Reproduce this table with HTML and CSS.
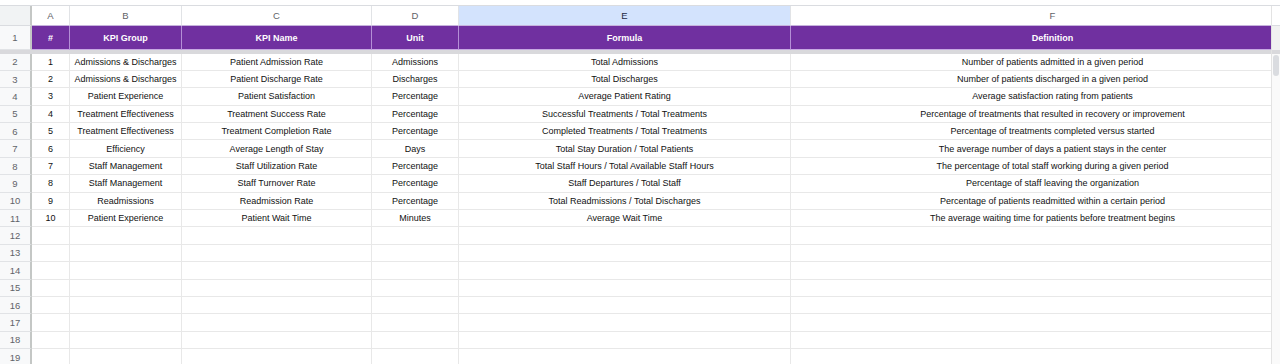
FILE: index.html
```html
<!DOCTYPE html>
<html lang="en">
<head>
<meta charset="utf-8">
<title>KPI Definitions</title>
<link rel="stylesheet" href="styles.css">
</head>
<body>
<div class="topstrip"></div>
<div class="sheet">
  <div class="grid">
    <div class="row colhead">
      <div class="corner"></div>
      <div class="ch">A</div><div class="ch">B</div><div class="ch">C</div><div class="ch">D</div><div class="ch sel">E</div><div class="ch">F</div>
    </div>
    <div class="row hdr">
      <div class="rh">1</div>
      <div class="hc">#</div><div class="hc">KPI Group</div><div class="hc">KPI Name</div><div class="hc">Unit</div><div class="hc">Formula</div><div class="hc">Definition</div>
    </div>
    <div class="freeze"></div>
    <div class="row data"><div class="rh">2</div><div class="c">1</div><div class="c">Admissions &amp; Discharges</div><div class="c">Patient Admission Rate</div><div class="c">Admissions</div><div class="c">Total Admissions</div><div class="c">Number of patients admitted in a given period</div></div>
    <div class="row data"><div class="rh">3</div><div class="c">2</div><div class="c">Admissions &amp; Discharges</div><div class="c">Patient Discharge Rate</div><div class="c">Discharges</div><div class="c">Total Discharges</div><div class="c">Number of patients discharged in a given period</div></div>
    <div class="row data"><div class="rh">4</div><div class="c">3</div><div class="c">Patient Experience</div><div class="c">Patient Satisfaction</div><div class="c">Percentage</div><div class="c">Average Patient Rating</div><div class="c">Average satisfaction rating from patients</div></div>
    <div class="row data"><div class="rh">5</div><div class="c">4</div><div class="c">Treatment Effectiveness</div><div class="c">Treatment Success Rate</div><div class="c">Percentage</div><div class="c">Successful Treatments / Total Treatments</div><div class="c">Percentage of treatments that resulted in recovery or improvement</div></div>
    <div class="row data"><div class="rh">6</div><div class="c">5</div><div class="c">Treatment Effectiveness</div><div class="c">Treatment Completion Rate</div><div class="c">Percentage</div><div class="c">Completed Treatments / Total Treatments</div><div class="c">Percentage of treatments completed versus started</div></div>
    <div class="row data"><div class="rh">7</div><div class="c">6</div><div class="c">Efficiency</div><div class="c">Average Length of Stay</div><div class="c">Days</div><div class="c">Total Stay Duration / Total Patients</div><div class="c">The average number of days a patient stays in the center</div></div>
    <div class="row data"><div class="rh">8</div><div class="c">7</div><div class="c">Staff Management</div><div class="c">Staff Utilization Rate</div><div class="c">Percentage</div><div class="c">Total Staff Hours / Total Available Staff Hours</div><div class="c">The percentage of total staff working during a given period</div></div>
    <div class="row data"><div class="rh">9</div><div class="c">8</div><div class="c">Staff Management</div><div class="c">Staff Turnover Rate</div><div class="c">Percentage</div><div class="c">Staff Departures / Total Staff</div><div class="c">Percentage of staff leaving the organization</div></div>
    <div class="row data"><div class="rh">10</div><div class="c">9</div><div class="c">Readmissions</div><div class="c">Readmission Rate</div><div class="c">Percentage</div><div class="c">Total Readmissions / Total Discharges</div><div class="c">Percentage of patients readmitted within a certain period</div></div>
    <div class="row data"><div class="rh">11</div><div class="c">10</div><div class="c">Patient Experience</div><div class="c">Patient Wait Time</div><div class="c">Minutes</div><div class="c">Average Wait Time</div><div class="c">The average waiting time for patients before treatment begins</div></div>
    <div class="row data"><div class="rh">12</div><div class="c"></div><div class="c"></div><div class="c"></div><div class="c"></div><div class="c"></div><div class="c"></div></div>
    <div class="row data"><div class="rh">13</div><div class="c"></div><div class="c"></div><div class="c"></div><div class="c"></div><div class="c"></div><div class="c"></div></div>
    <div class="row data"><div class="rh">14</div><div class="c"></div><div class="c"></div><div class="c"></div><div class="c"></div><div class="c"></div><div class="c"></div></div>
    <div class="row data"><div class="rh">15</div><div class="c"></div><div class="c"></div><div class="c"></div><div class="c"></div><div class="c"></div><div class="c"></div></div>
    <div class="row data"><div class="rh">16</div><div class="c"></div><div class="c"></div><div class="c"></div><div class="c"></div><div class="c"></div><div class="c"></div></div>
    <div class="row data"><div class="rh">17</div><div class="c"></div><div class="c"></div><div class="c"></div><div class="c"></div><div class="c"></div><div class="c"></div></div>
    <div class="row data"><div class="rh">18</div><div class="c"></div><div class="c"></div><div class="c"></div><div class="c"></div><div class="c"></div><div class="c"></div></div>
    <div class="row data"><div class="rh">19</div><div class="c"></div><div class="c"></div><div class="c"></div><div class="c"></div><div class="c"></div><div class="c"></div></div>
  </div>
  <div class="vscroll">
    <div class="vs-head"></div>
    <div class="vs-hdr"></div>
    <div class="vs-freeze"></div>
    <div class="vs-track"><div class="vs-thumb"></div></div>
  </div>
</div>
</body>
</html>
```
FILE: styles.css
```css
html, body {
  margin: 0;
  padding: 0;
  background: #ffffff;
  overflow: hidden;
  height: 364px;
}
body {
  font-family: "Liberation Sans", Arial, sans-serif;
  font-size: 9px;
  color: #1a1a1a;
}
.topstrip {
  height: 6px;
  border-bottom: 1px solid #dadce0;
  box-sizing: border-box;
}
.sheet {
  display: flex;
  align-items: stretch;
  height: 358px;
}
.grid {
  width: 1271px;
  flex: none;
  overflow: hidden;
}
.row {
  display: grid;
  grid-template-columns: 32px 38px 112px 190px 87px 332px 524px;
}
.row > div {
  box-sizing: border-box;
  display: flex;
  align-items: center;
  justify-content: center;
  white-space: nowrap;
  overflow: hidden;
}
.colhead {
  height: 20px;
}
.corner {
  background: #f1f3f4;
  border-right: 2px solid #c4c7c5;
  border-bottom: 1px solid #dadce0;
}
.ch {
  background: #ffffff;
  color: #5f6368;
  font-size: 9.5px;
  border-right: 1px solid #e1e3e6;
  border-bottom: 1px solid #c6b3dc;
}
.ch.sel {
  background: #d3e3fd;
  color: #1f2a44;
}
.hdr {
  height: 24px;
}
.rh {
  background: #f8f9fa;
  color: #5f6368;
  font-size: 9.5px;
  border-right: 2px solid #c4c7c5;
  border-bottom: 1px solid #e1e3e6;
}
.hc {
  background: #7030a0;
  color: #ffffff;
  font-weight: bold;
  border-right: 1px solid #b48fd6;
  border-bottom: 1px solid #c7a9e2;
}
.freeze {
  height: 3.5px;
  background: #d9d9dc;
}
.data {
  height: 17.4px;
}
.c {
  border-right: 1px solid #e8e8e8;
  border-bottom: 1px solid #e8e8e8;
  color: #111111;
}
.vscroll {
  width: 9px;
  flex: none;
  display: flex;
  flex-direction: column;
  border-left: 1px solid #e3e3e3;
  box-sizing: border-box;
}
.vs-head {
  height: 20px;
  background: #ffffff;
  border-bottom: 1px solid #dadce0;
  box-sizing: border-box;
}
.vs-hdr {
  height: 24px;
  background: #f1f1f1;
}
.vs-freeze {
  height: 3.5px;
  background: #d9d9dc;
}
.vs-track {
  flex: 1;
  background: #fafafa;
  padding: 1px 1px 0 1px;
}
.vs-thumb {
  height: 21px;
  background: #dadce0;
  border-radius: 4px;
}
```
